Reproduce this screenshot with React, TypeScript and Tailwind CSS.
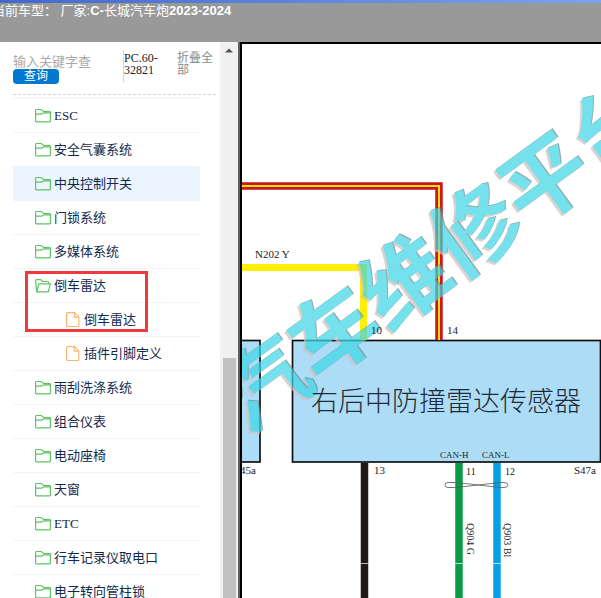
// type: folder = closed, open = expanded, file = leaf page
type TreeItem = {
  id: number
  title: string
  type: "folder" | "open" | "file"
  active?: boolean
}

const items: TreeItem[] = [
  { id: 1, title: "ESC", type: "folder" },
  { id: 2, title: "安全气囊系统", type: "folder" },
  { id: 3, title: "中央控制开关", type: "folder", active: true },
  { id: 4, title: "门锁系统", type: "folder" },
  { id: 5, title: "多媒体系统", type: "folder" },
  { id: 6, title: "倒车雷达", type: "open" },
  { id: 7, title: "倒车雷达", type: "file" },
  { id: 8, title: "插件引脚定义", type: "file" },
  { id: 9, title: "雨刮洗涤系统", type: "folder" },
  { id: 10, title: "组合仪表", type: "folder" },
  { id: 11, title: "电动座椅", type: "folder" },
  { id: 12, title: "天窗", type: "folder" },
  { id: 13, title: "ETC", type: "folder" },
  { id: 14, title: "行车记录仪取电口", type: "folder" },
  { id: 15, title: "电子转向管柱锁", type: "folder" },
]

function TreeIcon({ type }: { type: TreeItem["type"] }) {
  if (type === "file") {
    return (
      <svg width="14" height="16" viewBox="0 0 14 16" fill="none" stroke="#f5b877" strokeWidth="1.2" className="shrink-0">
        <path d="M.6 1.500q0-.9.9-.9H8.500L12.800 5v8.600q0 .9-.9.9H1.500q-.9 0-.9-.9z" />
        <path d="M8.300.8v4.400h4.300" />
      </svg>
    )
  }
  if (type === "open") {
    return (
      <svg width="16" height="16" viewBox="0 0 16 16" fill="none" stroke="#5fc463" strokeWidth="1.2" className="shrink-0">
        <path d="M1.700 13.600L.6 2.500q0-.9.9-.9h4.300L7.500 3.500h5.300q.9 0 .9.900v1.400" />
        <path d="M1.700 13.800L3.800 5.900h11.500l-2 7.900z" />
      </svg>
    )
  }
  return (
    <svg width="16" height="16" viewBox="0 0 16 16" fill="none" stroke="#5fc463" strokeWidth="1.2" className="shrink-0">
      <path d="M.6 13.100V2.300q0-.8.8-.8h4.800L8.800 3.600h5.800q.8 0 .8.800v8.700q0 .7-.8.7H1.400q-.8 0-.8-.7z" />
      <path d="M.6 6.200h6l2.200-1.400h6.400" />
    </svg>
  )
}

function Sidebar() {
  return (
    <aside className="flex w-[240px] shrink-0">
      <div className="min-w-0 flex-1 pl-[13px]">
        <div className="mr-1 flex h-[53px] border-b border-dashed border-gray-300 pt-2">
          <form className="flex w-[110px] shrink-0 flex-col items-start pt-1">
            <input
              aria-label="输入关键字查询"
              placeholder="输入关键字查"
              className="h-[15px] w-20 bg-transparent text-[13px] leading-4 text-gray-700 outline-none placeholder:text-[#a9a9a9]"
            />
            <button type="button" className="h-[15px] w-[46px] rounded bg-[#0078d0] text-xs leading-[15px] text-white">
              查询
            </button>
          </form>
          <div className="h-8 w-11 border-l border-gray-300 pt-0.5 font-['Liberation_Serif',serif] text-xs leading-3 text-[#222]">
            PC.60-32821
          </div>
          <a href="#" className="ml-2.5 w-9 pt-0.5 text-xs leading-3 text-[#8c8c8c]">
            折叠全部
          </a>
        </div>

        <nav className="relative mt-0.5 mr-5 border-t-2 border-[#f5f6f7]">
          {items.map((item) => (
            <a
              key={item.id}
              href="#"
              className={`flex h-[34px] items-center border-b border-[#f2f4f5] font-['Liberation_Serif','Noto_Sans_CJK_SC',serif] text-[13px] text-[#12294d] ${item.active ? "bg-[#eaf5ff]" : ""} ${item.type === "file" ? "gap-1 pl-[53px]" : "gap-[3px] pl-[22px]"}`}
            >
              <TreeIcon type={item.type} />
              <span>{item.title}</span>
            </a>
          ))}
          {/* red frame over the current section */}
          <div className="pointer-events-none absolute top-[172px] left-3 h-[61px] w-[123px] border-3 border-[#ef3a3c]" />
        </nav>
      </div>

      <div className="flex w-[18px] shrink-0 flex-col items-center bg-[#f0f0f0]">
        <svg width="8" height="5" viewBox="0 0 8 5" className="mt-1.5">
          <path d="M0 4.500L4 .5l4 4z" fill="#505050" />
        </svg>
        <div className="mt-[305px] w-[13px] flex-1 bg-[#c1c1c1]" />
      </div>
      <div className="w-[2px] shrink-0 bg-[#606060]" />
    </aside>
  )
}

function Diagram() {
  return (
    <svg width="700" height="554" viewBox="242 44 700 554" className="block max-w-none">
      {/* connector boxes */}
      <rect x="200" y="340.500" width="60" height="121.500" fill="#addcf6" stroke="#111" strokeWidth="1.700" />
      <rect x="292.500" y="340.500" width="308" height="121.500" fill="#addcf6" stroke="#111" strokeWidth="1.700" />

      {/* wires */}
      <path d="M241 186H439V340" fill="none" stroke="#c8171e" strokeWidth="7.500" />
      <path d="M241 186H439V340" fill="none" stroke="#ffe100" strokeWidth="2" />
      <path d="M241 267.500H363.500V340" fill="none" stroke="#ffef00" strokeWidth="7" />
      <path d="M364.500 463V598" stroke="#231815" strokeWidth="7.500" />
      <path d="M459 463V598" stroke="#0a9b48" strokeWidth="7.500" />
      <path d="M497 463V598" stroke="#08a0e4" strokeWidth="7.500" />
      <path d="M360 563.500h9M454 563.500h10M492 563.500h10" stroke="#fff" strokeWidth=".7" />
      {/* twisted pair mark */}
      <path d="M454 482.500h-6q-3 0-3 2.500t3 2.500h5c8 0 42-5 51-5q4 0 4 2.500t-4 2.500c-9 0-43-5-51-5z" fill="none" stroke="#555" strokeWidth=".8" />

      {/* watermark: light edge, dark edge, then the face */}
      <g className="font-['Noto_Sans_CJK_SC',sans-serif] font-bold" fontSize="87" opacity=".72">
        <text transform="translate(245 437) rotate(-36)" fill="#d3bfbc">汽车维修平台</text>
        <text transform="translate(248 434) rotate(-36)" fill="#6f8a8f">汽车维修平台</text>
        <text transform="translate(247 435) rotate(-36)" fill="#3fd6e6">汽车维修平台</text>
      </g>

      <g className="font-['Liberation_Serif',serif]" fill="#222" fontSize="11">
        <text x="255" y="258">N202 Y</text>
        <text x="371" y="334">10</text>
        <text x="447" y="334">14</text>
        <text x="374" y="474">13</text>
        <text x="240" y="474">45a</text>
        <text x="574" y="474">S47a</text>
        <text x="466" y="475" fontSize="10">11</text>
        <text x="505" y="475" fontSize="10">12</text>
        <text x="440" y="458" fontSize="9">CAN-H</text>
        <text x="482" y="458" fontSize="9">CAN-L</text>
        <text transform="translate(467 523) rotate(90)" fontSize="10">Q904 G</text>
        <text transform="translate(504 523) rotate(90)" fontSize="10">Q903 Bl</text>
      </g>
      <text x="311" y="411" fontSize="27" fill="#1d2b38" className="font-['Noto_Sans_CJK_SC',sans-serif] font-light">
        右后中防撞雷达传感器
      </text>
    </svg>
  )
}

export default function App() {
  return (
    <div className="flex h-screen flex-col overflow-hidden bg-white font-['Liberation_Sans','Noto_Sans_CJK_SC',sans-serif]">
      <header className="h-[42px] shrink-0 bg-[#999]">
        <div className="h-[3px] bg-linear-to-r from-[#4468c8] to-[#7ba4ee]" />
        <h1 className="-ml-2 text-[13px] leading-4 whitespace-pre text-white">
          当前车型： 厂家:<b>C-</b>长城汽车炮<b>2023-2024</b>
        </h1>
      </header>
      <main className="flex min-h-0 flex-1">
        <Sidebar />
        <section className="min-w-0 flex-1 overflow-hidden border-t-2 border-l-2 border-black">
          <Diagram />
        </section>
      </main>
    </div>
  )
}
